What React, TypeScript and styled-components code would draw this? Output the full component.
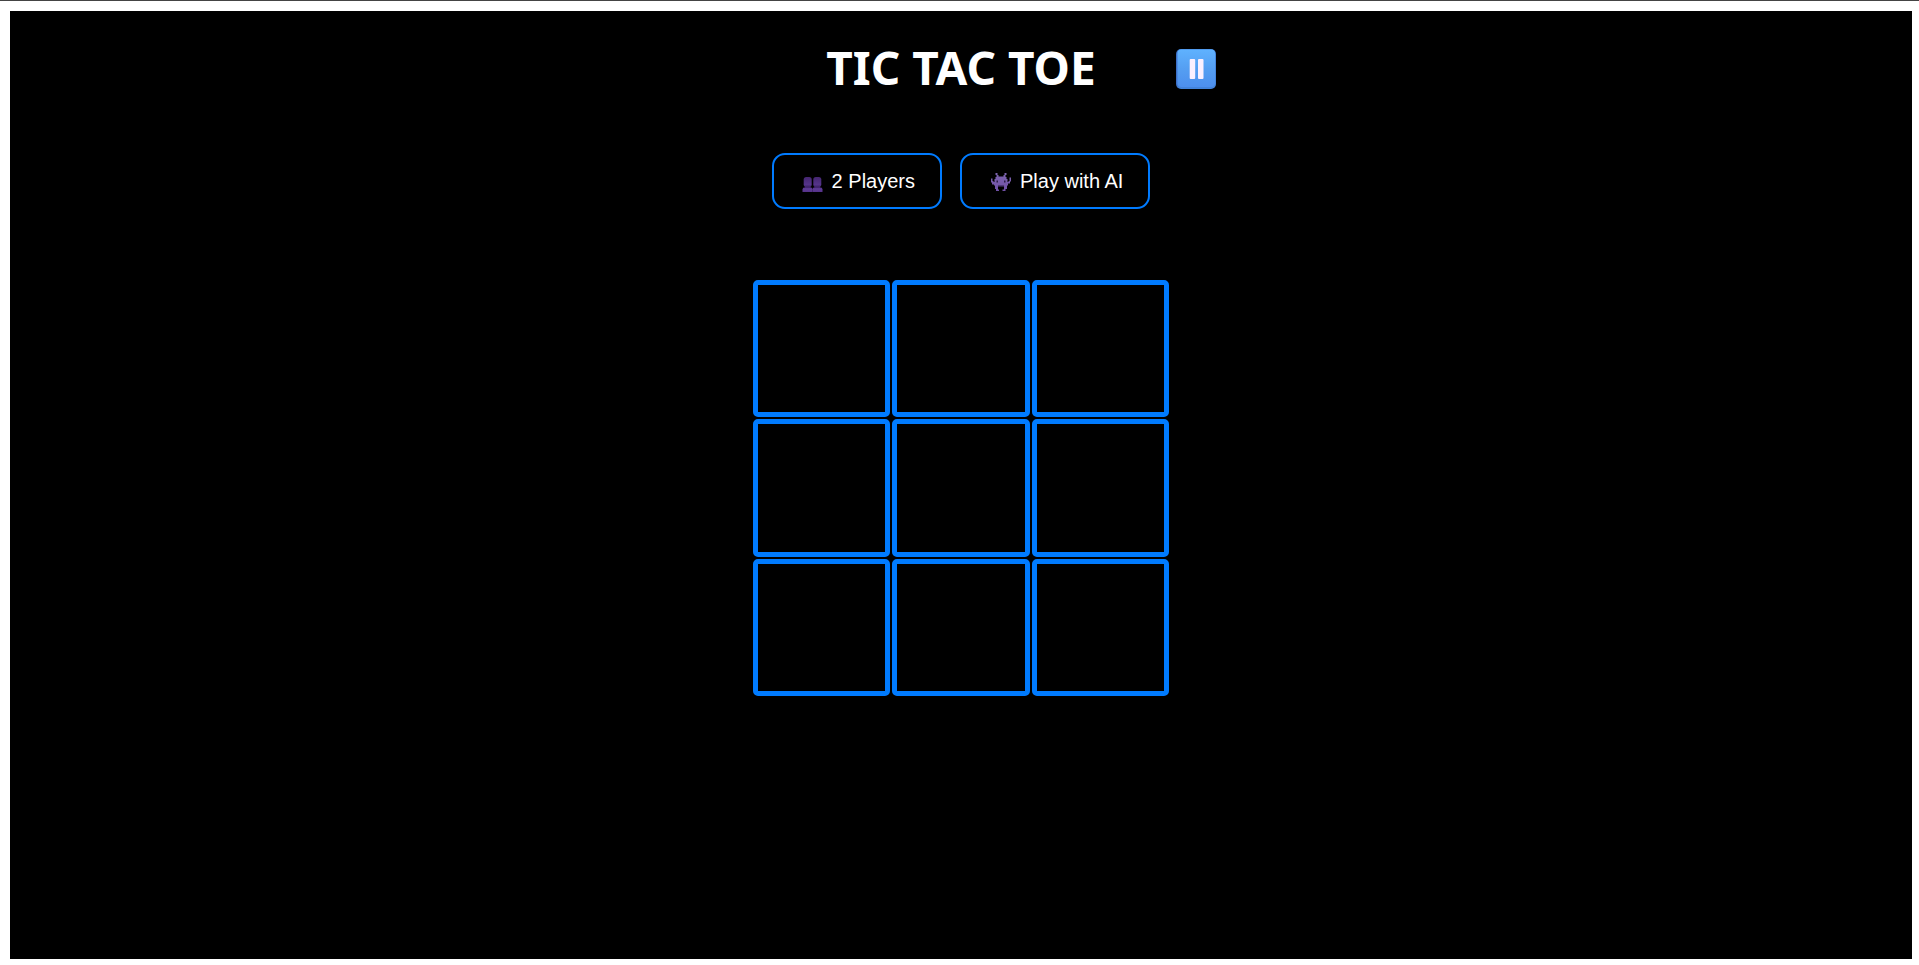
import React, { useState } from "react";
import styled, { createGlobalStyle } from "styled-components";

const blue = "#007bff";

const GlobalStyle = createGlobalStyle`
  *, *::before, *::after { box-sizing: border-box; }
  body {
    margin: 0;
    background: #fff;
    font-family: "Liberation Sans", Arial, sans-serif;
  }
`;

const Page = styled.div`
  display: flex;
  min-height: 100vh;
  padding: 10px 7px 6px 10px;
  border-top: 1px solid #444;
`;

const Game = styled.main`
  flex: 1;
  display: flex;
  flex-direction: column;
  align-items: center;
  background: #000;
  color: #fff;
`;

const Header = styled.header`
  display: grid;
  grid-template-columns: 1fr auto 1fr;
  align-items: center;
  column-gap: 80px;
  width: 100%;
  height: 60px;
  margin-top: 28px;
`;

const Title = styled.h1`
  grid-column: 2;
  margin: 0;
  padding-bottom: 4px;
  font-family: "Comic Sans MS", "Noto Sans", sans-serif;
  font-size: 46px;
  line-height: 56px;
  font-weight: 700;
  white-space: nowrap;
`;

const PauseButton = styled.button`
  width: 40px;
  height: 40px;
  padding: 0;
  border: 0;
  background: none;
  cursor: pointer;

  svg { display: block; }
`;

const Modes = styled.div`
  display: flex;
  gap: 18px;
  margin-top: 54px;
`;

const ModeButton = styled.button`
  display: flex;
  align-items: center;
  gap: 5px;
  height: 56px;
  padding: 0 25px;
  border: 2px solid ${blue};
  border-radius: 13px;
  background: #000;
  color: #fff;
  font: 20px/24px "Liberation Sans", Arial, sans-serif;
  white-space: nowrap;
  cursor: pointer;
`;

const Board = styled.div`
  display: grid;
  grid-template-columns: repeat(3, 1fr);
  gap: 2px;
  width: 416px;
  max-width: 100%;
  margin-top: 71px;
`;

const Cell = styled.button`
  aspect-ratio: 1;
  padding: 0;
  border: 5px solid ${blue};
  border-radius: 5px;
  background: #000;
  color: #fff;
  font: 64px/1 "Liberation Sans", Arial, sans-serif;
  cursor: pointer;
`;

const PauseIcon = () => (
  <svg width="40" height="40" viewBox="0 0 40 40" aria-hidden="true">
    <defs>
      <linearGradient id="pauseFace" x1="0" y1="0" x2="0" y2="1">
        <stop offset="0" stopColor="#5fb2ff" />
        <stop offset="0.5" stopColor="#559ff2" />
        <stop offset="1" stopColor="#4d8fee" />
      </linearGradient>
      <linearGradient id="pauseEdge" x1="0" y1="0" x2="1" y2="0">
        <stop offset="0" stopColor="#3b6cc4" />
        <stop offset="0.08" stopColor="#4384dc" />
        <stop offset="1" stopColor="#4384dc" />
      </linearGradient>
    </defs>
    <rect width="40" height="40" rx="5" fill="url(#pauseEdge)" />
    <rect x="1.5" y="0.5" width="37.5" height="37.5" rx="4" fill="url(#pauseFace)" />
    <rect x="13.700" y="10" width="5.500" height="20" rx="1" fill="#fbf0ff" />
    <rect x="22" y="10" width="5.500" height="20" rx="1" fill="#fbf0ff" />
  </svg>
);

const PlayersIcon = () => (
  <svg width="28" height="24" viewBox="0 0 28 24" aria-hidden="true">
    <defs>
      <linearGradient id="bust" gradientUnits="userSpaceOnUse" x1="0" y1="8" x2="0" y2="23">
        <stop offset="0" stopColor="#452670" />
        <stop offset="0.5" stopColor="#55348a" />
        <stop offset="0.68" stopColor="#3a2064" />
        <stop offset="0.78" stopColor="#5f3b98" />
        <stop offset="1" stopColor="#553289" />
      </linearGradient>
    </defs>
    <g fill="url(#bust)">
      <rect x="4.700" y="8" width="8" height="10" rx="2.500" />
      <rect x="14.300" y="8" width="8" height="10" rx="2.500" />
      <rect x="6" y="15" width="5.500" height="4" />
      <rect x="15.500" y="15" width="5.500" height="4" />
      <path d="M3.500 23v-2.500q0-2.200 2.500-2.200h5.500q2 0 2 2v2.700z" />
      <path d="M13.500 23v-2.500q0-2.200 2-2.200H21q2.500 0 2.500 2.200V23z" />
    </g>
  </svg>
);

const InvaderIcon = () => (
  <svg width="28" height="24" viewBox="0 0 28 24" aria-hidden="true">
    <defs>
      <linearGradient id="invader" x1="0" y1="0" x2="0" y2="1">
        <stop offset="0" stopColor="#7c64ae" />
        <stop offset="1" stopColor="#7050a6" />
      </linearGradient>
    </defs>
    <path
      fill="url(#invader)"
      d="M8.500 4h2v2h1v1.500h5V6h1V4h2v2h-1v2h1v2h1v3h1v-1h1V8.500h1.500v4H23v2h-2v2h-1v3.500h-1.500v2h-3v-1.500h1.500V18h-6v2.500H12V22H9v-2H8v-3.500H7v-1H5v-2H4v-4h1.500V12h1v1h1v-3h1V8h1V6h-1z"
    />
    <path fill="#2b1c45" d="M9.500 11.500h1.500v2H9.500zM17 11.500h1.500v2H17zM11 16.500h6v1.500h-6z" />
  </svg>
);

type Mark = "X" | "O" | "";

export default function App() {
  const [cells, setCells] = useState<Mark[]>(Array(9).fill(""));
  const restart = () => setCells(Array(9).fill(""));
  const play = (index: number) =>
    setCells((current) => {
      if (current[index]) return current;
      const mark: Mark = current.filter(Boolean).length % 2 ? "O" : "X";
      return current.map((value, i) => (i === index ? mark : value));
    });

  return (
    <>
      <GlobalStyle />
      <Page>
        <Game>
          <Header>
            <Title>TIC TAC TOE</Title>
            <PauseButton type="button" aria-label="Pause">
              <PauseIcon />
            </PauseButton>
          </Header>
          <Modes>
            <ModeButton type="button" onClick={restart}>
              <PlayersIcon />
              2 Players
            </ModeButton>
            <ModeButton type="button" onClick={restart}>
              <InvaderIcon />
              Play with AI
            </ModeButton>
          </Modes>
          <Board>
            {cells.map((mark, i) => (
              <Cell key={i} type="button" aria-label={`Cell ${i + 1}`} onClick={() => play(i)}>
                {mark}
              </Cell>
            ))}
          </Board>
        </Game>
      </Page>
    </>
  );
}
